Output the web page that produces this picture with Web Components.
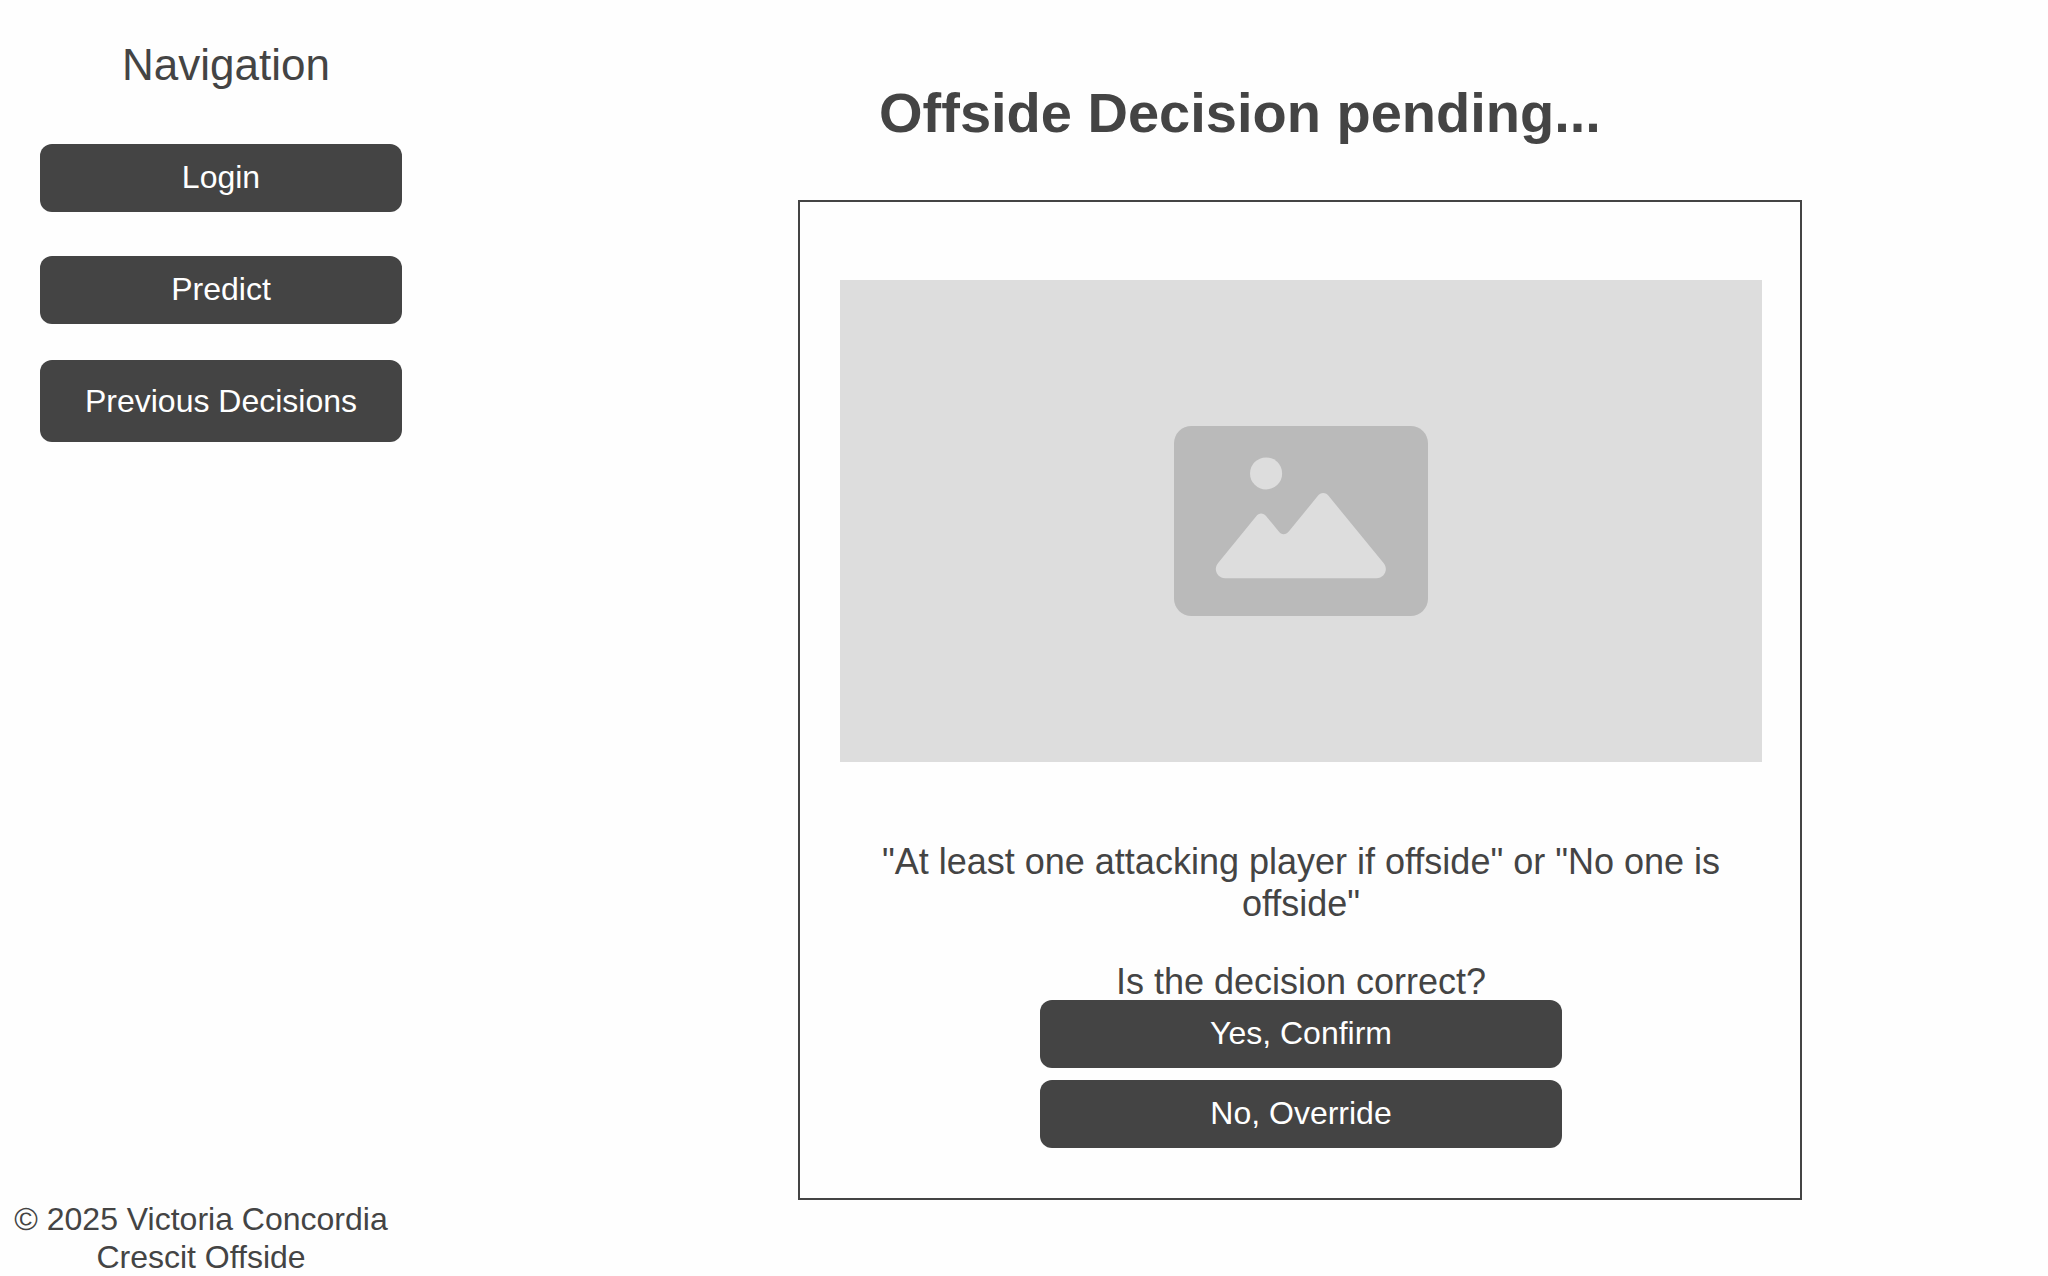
<!DOCTYPE html>
<html lang="en">
<head>
<meta charset="utf-8">
<meta name="viewport" content="width=device-width, initial-scale=1">
<title>Offside Decision</title>
<style>
  body { margin: 0; color: #444; background: #fefefe; font-family: "Liberation Sans", Arial, sans-serif; font-size: 32px; line-height: 38px; }
</style>
</head>
<body>
<offside-page>
  <side-nav slot="side">
    <action-button>Login</action-button>
    <action-button>Predict</action-button>
    <action-button size="large">Previous Decisions</action-button>
    <span slot="footer">© 2025 Victoria Concordia Crescit Offside</span>
  </side-nav>
  <decision-card>
    <image-placeholder slot="media"></image-placeholder>
    <span slot="result">"At least one attacking player if offside" or "No one is offside"</span>
    <span slot="question">Is the decision correct?</span>
    <action-button>Yes, Confirm</action-button>
    <action-button>No, Override</action-button>
  </decision-card>
</offside-page>
<script>
const define = (name, markup) => {
  const template = document.createElement('template');
  template.innerHTML = markup;
  customElements.define(name, class extends HTMLElement {
    constructor() {
      super();
      this.attachShadow({ mode: 'open' }).append(template.content.cloneNode(true));
    }
  });
};

define('action-button', `
  <style>
    :host { display: block; }
    button { display: block; width: 100%; margin: 0; padding: 14px 8px 16px; border: 0; border-radius: 12px;
      background: #444; color: #fff; font: inherit; text-align: center; cursor: pointer; }
    :host([size="large"]) button { padding: 22px 8px; }
  </style>
  <button type="button"><slot></slot></button>`);

define('side-nav', `
  <style>
    :host { display: flex; flex-direction: column; min-height: 100vh; }
    h2 { margin: 40px 0 54px; font-size: 44px; line-height: 50px; font-weight: 400; text-align: center; }
    nav { display: flex; flex-direction: column; padding: 0 50px 0 40px; }
    ::slotted(action-button) { margin-bottom: 44px; }
    ::slotted(action-button:nth-of-type(2)) { margin-bottom: 36px; }
    footer { margin-top: auto; padding-right: 50px; text-align: center; font-variant-ligatures: none; }
  </style>
  <h2>Navigation</h2>
  <nav><slot></slot></nav>
  <footer><slot name="footer"></slot></footer>`);

define('image-placeholder', `
  <style>
    :host { display: flex; align-items: center; justify-content: center; aspect-ratio: 922 / 482; background: #ddd; }
    svg { display: block; width: 254px; height: 190px; }
  </style>
  <svg viewBox="73 78 760 569" preserveAspectRatio="none" role="img" aria-label="Image placeholder">
    <rect x="73" y="78" width="760" height="569" rx="52" fill="#bababa"/>
    <circle cx="348.500" cy="220" r="48" fill="#ddd"/>
    <path fill="#ddd" d="M205 488 L319 348 C327 337 340 337 349 348 L386 393 C394 405 408 405 417 393 L503 288 C511 276 528 276 536 288 L700 488 C716 508 702 534 679 534 H226 C203 534 189 508 205 488 Z"/>
  </svg>`);

define('decision-card', `
  <style>
    :host { display: block; box-sizing: border-box; border: 2px solid #444; padding: 78px 38px 50px 40px; }
    p { margin: 0; font-size: 36px; line-height: 42px; text-align: center; font-variant-ligatures: none; }
    .result { margin: 79px 0 36px; }
    .actions { display: grid; gap: 12px; margin-top: -3px; padding: 0 200px; }
  </style>
  <slot name="media"></slot>
  <p class="result"><slot name="result"></slot></p>
  <p class="question"><slot name="question"></slot></p>
  <div class="actions"><slot></slot></div>`);

define('offside-page', `
  <style>
    :host { display: grid; grid-template-columns: 452px minmax(0, 1fr); min-height: 100vh; }
    h1 { margin: 81px 20px 55px 0; font-size: 56px; line-height: 64px; text-align: center; font-variant-ligatures: none; }
    .stage { display: grid; grid-template-columns: 346fr minmax(0, 1004px) 246fr; }
    .stage slot { display: block; grid-column: 2; }
  </style>
  <aside><slot name="side"></slot></aside>
  <main>
    <h1>Offside Decision pending...</h1>
    <div class="stage"><slot></slot></div>
  </main>`);
</script>
</body>
</html>
